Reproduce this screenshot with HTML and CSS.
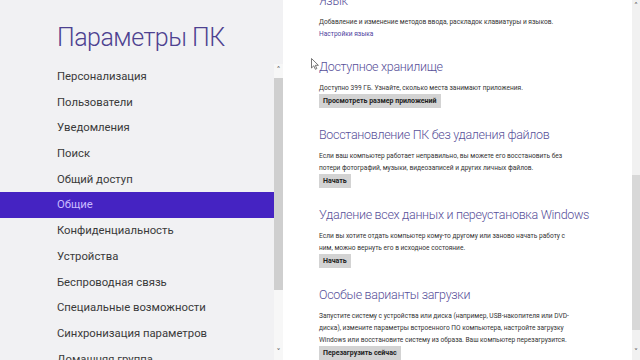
FILE: index.html
```html
<!DOCTYPE html>
<html lang="ru">
<head>
<meta charset="utf-8">
<title>Параметры ПК</title>
<link rel="stylesheet" href="styles.css">
</head>
<body>
<div class="app">
  <aside class="nav">
    <div class="nav-inner">
      <h1 class="nav-title">Параметры ПК</h1>
      <ul class="menu">
        <li class="menu-item">Персонализация</li>
        <li class="menu-item">Пользователи</li>
        <li class="menu-item">Уведомления</li>
        <li class="menu-item">Поиск</li>
        <li class="menu-item">Общий доступ</li>
        <li class="menu-item is-active">Общие</li>
        <li class="menu-item">Конфиденциальность</li>
        <li class="menu-item">Устройства</li>
        <li class="menu-item">Беспроводная связь</li>
        <li class="menu-item">Специальные возможности</li>
        <li class="menu-item">Синхронизация параметров</li>
        <li class="menu-item">Домашняя группа</li>
      </ul>
    </div>
    <div class="vscroll vscroll-nav">
      <span class="arrow">&#708;</span>
      <span class="thumb thumb-nav"></span>
      <span class="rest"></span>
      <span class="arrow">&#709;</span>
    </div>
  </aside>
  <main class="content">
    <div class="sections">
      <section class="section section-lang">
        <h2 class="sec-title">Язык</h2>
        <p class="sec-text">Добавление и изменение методов ввода, раскладок клавиатуры и языков.</p>
        <a class="sec-link">Настройки языка</a>
      </section>
      <section class="section">
        <h2 class="sec-title">Доступное хранилище</h2>
        <p class="sec-text">Доступно 399 ГБ. Узнайте, сколько места занимают приложения.</p>
        <button class="btn">Просмотреть размер приложений</button>
      </section>
      <section class="section">
        <h2 class="sec-title">Восстановление ПК без удаления файлов</h2>
        <p class="sec-text">Если ваш компьютер работает неправильно, вы можете его восстановить без<br>потери фотографий, музыки, видеозаписей и других личных файлов.</p>
        <button class="btn">Начать</button>
      </section>
      <section class="section">
        <h2 class="sec-title">Удаление всех данных и переустановка Windows</h2>
        <p class="sec-text">Если вы хотите отдать компьютер кому-то другому или заново начать работу с<br>ним, можно вернуть его в исходное состояние.</p>
        <button class="btn">Начать</button>
      </section>
      <section class="section">
        <h2 class="sec-title">Особые варианты загрузки</h2>
        <p class="sec-text">Запустите систему с устройства или диска (например, USB-накопителя или DVD-<br>диска), измените параметры встроенного ПО компьютера, настройте загрузку<br>Windows или восстановите систему из образа. Ваш компьютер перезагрузится.</p>
        <button class="btn">Перезагрузить сейчас</button>
      </section>
    </div>
    <div class="vscroll vscroll-main">
      <span class="arrow">&#708;</span>
      <span class="track-top"></span>
      <span class="thumb thumb-main"></span>
      <span class="rest"></span>
      <span class="arrow">&#709;</span>
    </div>
    <svg class="cursor" width="8" height="12" viewBox="0 0 8 12"><path d="M0.5 0.5 L0.5 10 L2.8 7.8 L4.4 11.3 L5.8 10.6 L4.3 7.3 L7.4 7.3 Z" fill="#fff" stroke="#555" stroke-width="0.8"/></svg>
  </main>
</div>
</body>
</html>
```
FILE: styles.css
```css
* { box-sizing: border-box; }
html, body { margin: 0; padding: 0; }
body {
  width: 640px;
  height: 360px;
  overflow: hidden;
  font-family: Roboto, "Noto Sans", sans-serif;
  background: #fff;
}
.app {
  display: flex;
  height: 360px;
}
.nav {
  width: 283px;
  flex: none;
  background: #f1f1f3;
  display: flex;
}
.nav-inner {
  width: 274px;
  flex: none;
}
.nav-title {
  margin: 0;
  padding: 20px 0 0 57px;
  height: 64px;
  font-size: 25px;
  font-weight: 300;
  letter-spacing: -0.5px;
  color: #4d4190;
  line-height: 36px;
}
.menu {
  list-style: none;
  margin: 0;
  padding: 0;
}
.menu-item {
  height: 25.7px;
  line-height: 25.7px;
  padding-left: 57px;
  font-size: 11.3px;
  color: #3a3a3a;
  white-space: nowrap;
}
.menu-item.is-active {
  background: #4523c2;
  color: #c9bbff;
}
.vscroll {
  width: 9px;
  flex: none;
  display: flex;
  flex-direction: column;
  align-items: stretch;
}
.vscroll-nav {
  margin-top: 64px;
  background: #f7f7f7;
}
.arrow {
  height: 14px;
  font-size: 8px;
  line-height: 14px;
  text-align: center;
  color: #555;
  font-family: "DejaVu Sans", sans-serif;
}
.thumb { background: #cfcfcf; }
.thumb-nav { height: 212px; }
.rest { flex: 1; }
.content {
  flex: 1;
  display: flex;
  position: relative;
  overflow: hidden;
}
.sections {
  flex: 1;
  padding-left: 36px;
  margin-top: -10px;
}
.section {
  margin-bottom: 16px;
}
.sec-title {
  margin: 0;
  font-size: 12.5px;
  font-weight: 300;
  letter-spacing: -0.3px;
  color: #585099;
  line-height: 22px;
  height: 26px;
  white-space: nowrap;
}
.sec-text {
  margin: 0;
  font-size: 6.6px;
  line-height: 12px;
  color: #333;
  white-space: nowrap;
}
.sec-link {
  display: block;
  font-size: 6.6px;
  line-height: 12px;
  color: #4f3fa0;
}
.btn {
  display: block;
  margin: 0;
  height: 14px;
  padding: 0 4px;
  border: 0;
  background: #d3d3d3;
  font-family: inherit;
  font-size: 7px;
  font-weight: 700;
  color: #222;
  line-height: 14px;
}
.vscroll-main {
  width: 8px;
  background: #f1f1f1;
}
.track-top { height: 161px; }
.thumb-main { height: 155px; background: #d8d8d8; }
.cursor {
  position: absolute;
  left: 28px;
  top: 58px;
}
```
